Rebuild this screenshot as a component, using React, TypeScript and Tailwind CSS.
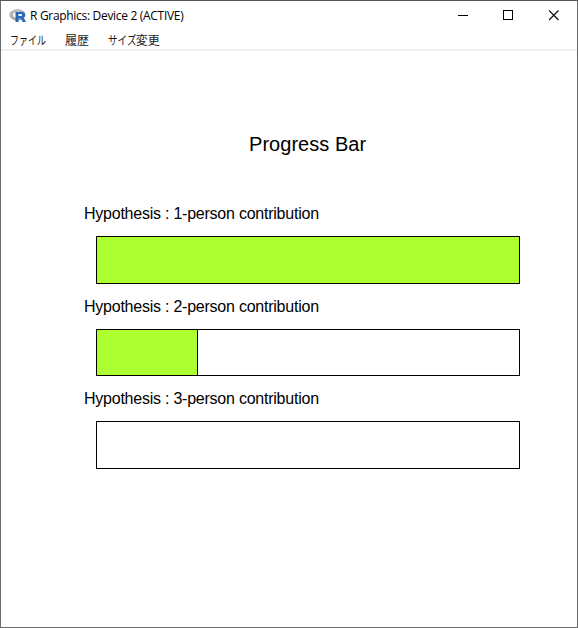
const plotFont = "font-['Liberation_Sans',Arial,sans-serif]";

function RLogo() {
  return (
    <svg className="ml-2 h-4 w-[17px] shrink-0" viewBox="0 0 17 16">
      <defs>
        <linearGradient id="ring" x1="0" y1="0" x2="1" y2="1">
          <stop offset="0" stopColor="#c3c6cc" />
          <stop offset="1" stopColor="#8f9298" />
        </linearGradient>
      </defs>
      <path
        fill="url(#ring)"
        fillRule="evenodd"
        d="M8.300 1.200C3.900 1.200.3 3.500.3 6.700s3.600 5.700 8 5.700 8.200-2.500 8.200-5.700-3.800-5.500-8.200-5.500Zm1.300 2.600c3 0 4.900 1 4.900 3.200s-1.900 3.300-4.900 3.300-5.500-1.200-5.500-3.300 2.500-3.200 5.500-3.200Z"
      />
      <path
        fill="#2768b8"
        fillRule="evenodd"
        d="M6.500 3.900h6c2.400 0 3.600 1.200 3.600 3 0 1.400-.8 2.300-2 2.700.5.2.8.5 1.100 1l1.800 3.400h-3.300l-1.500-3c-.3-.5-.5-.7-1.100-.7H9.500v3.700h-3ZM9.500 6.100v2h2.200c.9 0 1.300-.3 1.300-1s-.4-1-1.300-1Z"
      />
    </svg>
  );
}

function TitleBar() {
  return (
    <header className="flex h-[29px] items-center">
      <RLogo />
      <span className="ml-[4px] w-[156px] whitespace-nowrap font-['Open_Sans','Noto_Sans',sans-serif] text-[12px] leading-4 tracking-[-0.310px]">
        R Graphics: Device 2 (ACTIVE)
      </span>
      <div className="ml-auto flex h-full items-center gap-[35px] pr-[17px]">
        <svg className="h-[11px] w-[11px]" viewBox="0 0 11 11" shapeRendering="crispEdges">
          <path d="M1 5.500h10" stroke="#000" />
        </svg>
        <svg className="h-[11px] w-[11px]" viewBox="0 0 11 11" shapeRendering="crispEdges">
          <path d="M.5.5h9v9h-9Z" stroke="#000" fill="none" />
        </svg>
        <svg className="h-[11px] w-[11px]" viewBox="0 0 11 11">
          <path d="M0 .5l9.500 9.500M9.500 .5L0 10" stroke="#000" strokeWidth="1.100" />
        </svg>
      </div>
    </header>
  );
}

function MenuBar() {
  return (
    <nav className="flex h-[21px] items-start border-b-2 border-[#f0f0f0] pl-[9px] pt-[2px] font-['Noto_Sans_CJK_JP',sans-serif] text-[12px] leading-4 whitespace-nowrap text-[#1a1a1a]">
      <span className="w-[55px]">
        <span className="inline-block origin-left scale-x-[0.75]">ファイル</span>
      </span>
      <span className="w-[43px]">履歴</span>
      <span>
        <span className="inline-block origin-left scale-x-[0.8]">サイズ</span>
        <span className="-ml-[8px]">変更</span>
      </span>
    </nav>
  );
}

function Hypothesis({ label, fill, bar, gap }: { label: string; fill: string; bar: string; gap: string }) {
  return (
    <section className={gap}>
      <p className={`${plotFont} h-[18px] whitespace-nowrap pl-[83px] text-[16px] leading-[18px] tracking-[-0.235px]`}>
        {label}
      </p>
      <div className={`${bar} ml-[95px] mt-[13px] w-[424px] border border-black`}>
        <div className={`${fill} h-full bg-[#adff2f]`} />
      </div>
    </section>
  );
}

export default function App() {
  return (
    <main className="flex h-[628px] w-[578px] flex-col overflow-hidden border border-[#6b6b6b] border-t-[#555555] bg-white text-black">
      <TitleBar />
      <MenuBar />
      <div className="flex-1 pt-[81px]">
        <h1 className={`${plotFont} h-6 pl-[248px] text-[20px] leading-6 tracking-[0.040px]`}>Progress Bar</h1>
        <Hypothesis label="Hypothesis : 1-person contribution" gap="mt-[49px]" bar="h-[48px]" fill="w-full" />
        <Hypothesis label="Hypothesis : 2-person contribution" gap="mt-[14px]" bar="h-[47px]" fill="w-[101px] border-r border-black" />
        <Hypothesis label="Hypothesis : 3-person contribution" gap="mt-[14px]" bar="h-[48px]" fill="w-0" />
      </div>
    </main>
  );
}
